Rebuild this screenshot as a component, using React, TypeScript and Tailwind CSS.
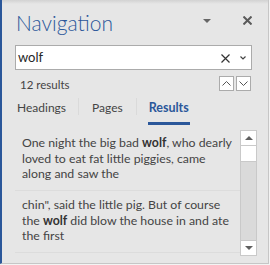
const font = { fontFamily: 'Lato, "Open Sans", sans-serif' }

const results = [
  { before: 'One night the big bad ', hit: 'wolf', after: ', who dearly loved to eat fat little piggies, came along and saw the' },
  { before: 'chin", said the little pig. But of course the ', hit: 'wolf', after: ' did blow the house in and ate the first' },
]

function Caret({ up }: { up?: boolean }) {
  return (
    <svg width="9" height="5" viewBox="0 0 9 5">
      <path d={up ? 'M0.5 4.5 L4.5 0.5 L8.5 4.5' : 'M0.5 0.5 L4.5 4.5 L8.5 0.5'} fill="none" stroke="#555" strokeWidth="1" />
    </svg>
  )
}

function Cross({ size, width, color }: { size: number; width: number; color: string }) {
  return (
    <svg width={size} height={size} viewBox={`0 0 ${size} ${size}`}>
      <path d={`M0.5 0.5 L${size - 0.5} ${size - 0.5} M${size - 0.5} 0.5 L0.5 ${size - 0.5}`} stroke={color} strokeWidth={width} fill="none" />
    </svg>
  )
}

export default function App() {
  return (
    <div className="w-[270px] h-[265px] bg-[#f3f3f3]" style={font}>
      <div className="w-[269px] h-[264px] flex flex-col bg-[#e6e6e6] border-l-2 border-[#2b579a] border-r border-b border-r-[#c6c6c6] border-b-[#c6c6c6] overflow-hidden">
        <div className="h-[4px] shrink-0 bg-linear-to-b from-[#d2d2d2] to-[#e6e6e6]" />

        <div className="flex items-start h-[36px] shrink-0 pl-[14px] pr-[16px]">
          <span className="mt-[8px] text-[21px] leading-[21px] font-light text-[#2b579a]">Navigation</span>
          <span className="ml-auto mt-[15px] w-0 h-0 border-l-[4px] border-r-[4px] border-t-[4px] border-l-transparent border-r-transparent border-t-[#666]" />
          <span className="ml-[32px] mt-[12px] flex"><Cross size={9} width={2} color="#5a5a5a" /></span>
        </div>

        <div className="mt-[5px] ml-[13px] w-[237px] h-[25px] shrink-0 flex items-center bg-white border border-[#ababab]">
          <span className="pl-[2px] text-[13px] text-[#262626]">wolf</span>
          <span className="ml-auto mr-[10px] mt-[1px] flex"><Cross size={9} width={1.2} color="#333" /></span>
          <span className="mr-[5px] mt-[1px] flex">
            <svg width="6" height="4" viewBox="0 0 6 4"><path d="M0.5 0.5 L3 3 L5.5 0.5" fill="none" stroke="#444" strokeWidth="1.2" /></svg>
          </span>
        </div>

        <div className="flex items-start mt-[6px] ml-[18px] mr-[17px] h-[16px] shrink-0">
          <span className="mt-[2px] text-[11.5px] leading-[14px] text-[#444]">12 results</span>
          <div className="ml-auto flex gap-[2px]">
            <div className="w-[15px] h-[15px] bg-white border border-[#ababab] flex items-center justify-center"><Caret up /></div>
            <div className="w-[15px] h-[15px] bg-white border border-[#ababab] flex items-center justify-center"><Caret /></div>
          </div>
        </div>

        <div className="flex items-start h-[33px] shrink-0 text-[12px] leading-[14px]">
          <div className="ml-[15px] pt-[9px] text-[#444]">Headings</div>
          <div className="ml-[12px] mt-[6px] w-px h-[17px] bg-[#dadada]" />
          <div className="ml-[13px] pt-[9px] text-[#444]">Pages</div>
          <div className="ml-[13px] mt-[6px] w-px h-[17px] bg-[#dadada]" />
          <div className="ml-[11px] px-[1px] pt-[9px] h-[33px] text-[12.5px] font-bold text-[#2b579a] border-b-[3px] border-[#2b579a]">Results</div>
        </div>

        <div className="flex mt-[4px] ml-[13px]">
          <div className="w-[225px]">
            {results.map((r, i) => (
              <div key={i} className="h-[62px] pl-[7px] pr-[4px] pt-[6px] text-[12.3px] leading-[15.5px] text-[#444] border-b border-[#dcdcdc]">
                {r.before}<b className="text-[#333]">{r.hit}</b>{r.after}
              </div>
            ))}
          </div>
          <div className="w-[17px] h-[126px] mt-[1px] flex flex-col bg-[#dadada] border border-[#c9c9c9]">
            <div className="h-[15px] bg-white border-b border-[#c9c9c9] flex items-center justify-center">
              <span className="w-0 h-0 border-l-[4px] border-r-[4px] border-b-[4px] border-l-transparent border-r-transparent border-b-[#606060]" />
            </div>
            <div className="h-[16px] bg-white border-b border-[#c9c9c9]" />
            <div className="flex-1" />
            <div className="h-[15px] bg-white border-t border-[#c9c9c9] flex items-center justify-center">
              <span className="w-0 h-0 border-l-[4px] border-r-[4px] border-t-[4px] border-l-transparent border-r-transparent border-t-[#606060]" />
            </div>
          </div>
        </div>
      </div>
    </div>
  )
}
